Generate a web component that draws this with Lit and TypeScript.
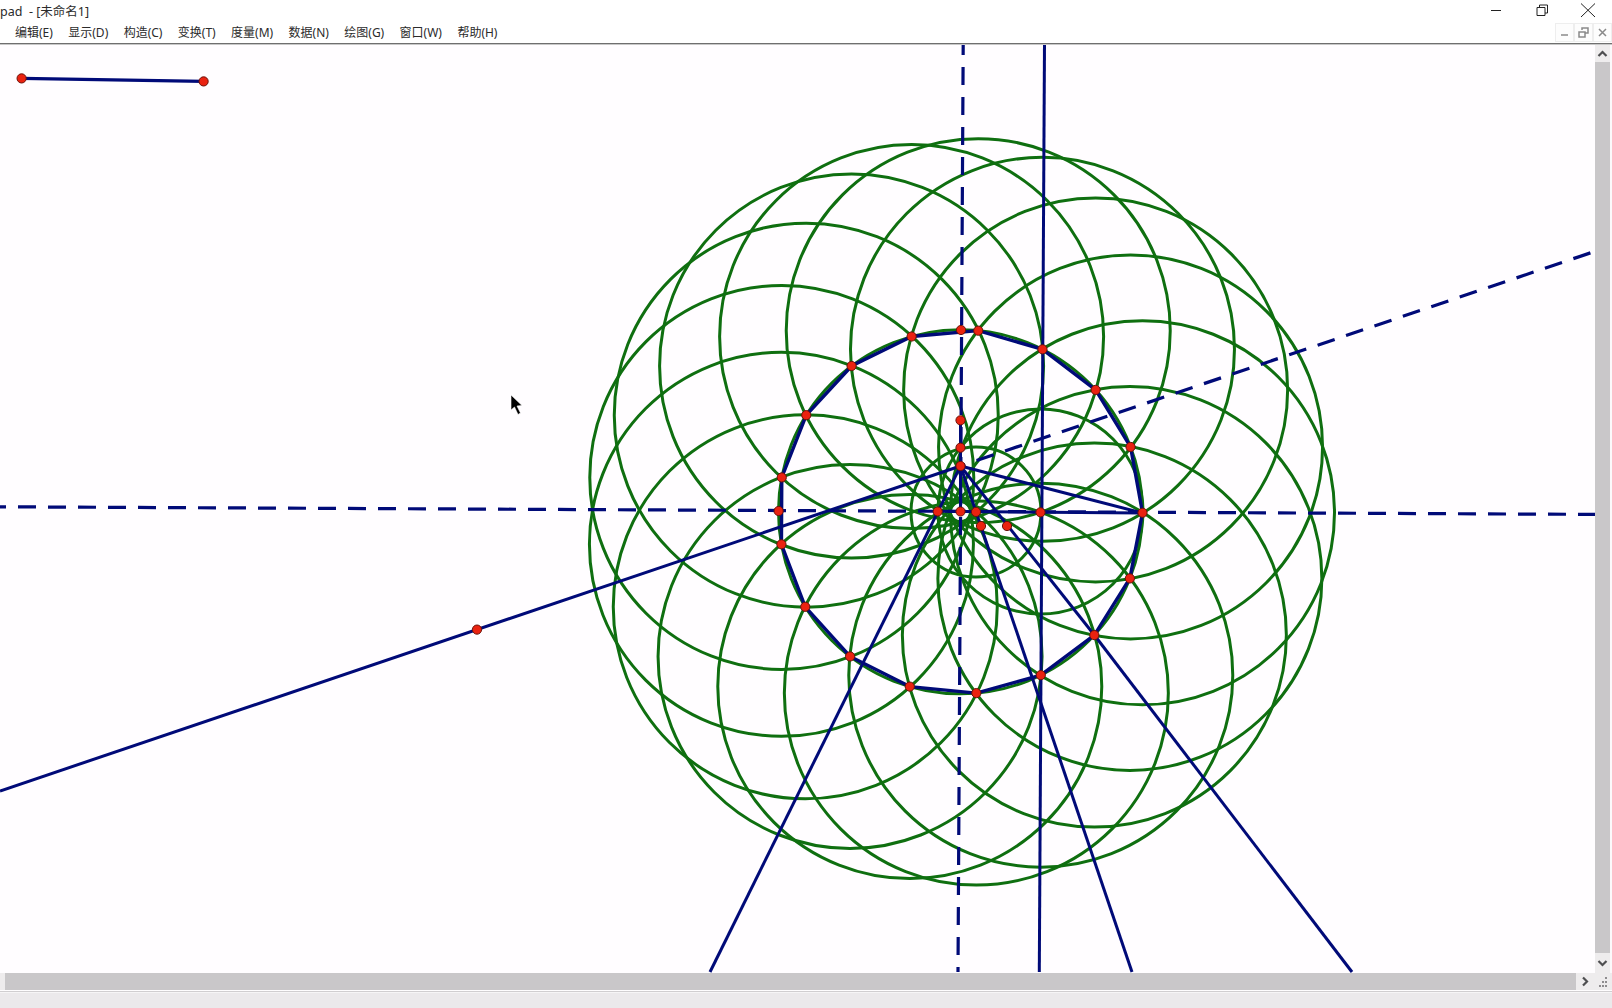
import { LitElement, html, css, svg } from "lit";
import { customElement } from "lit/decorators.js";

const MENUS = ["编辑(E)", "显示(D)", "构造(C)", "变换(T)", "度量(M)", "数据(N)", "绘图(G)", "窗口(W)", "帮助(H)"];

// regular 17-gon, slightly tilted like the original sketch
const CX = 960.5;
const CY = 511.8;
const R = 182;
const TILT = 0.3;
const vertices = Array.from({ length: 17 }, (_, i) => {
  const a = ((i * 360) / 17 + TILT) * (Math.PI / 180);
  return [CX + R * Math.cos(a), CY + R * Math.sin(a)];
});

const APEX = [960.5, 466];

// x1, y1, x2, y2
const solidLines = [
  [0, 791, ...APEX],
  [...APEX, 1142.4, 513],
  [...APEX, 710, 972],
  [...APEX, 1132, 972],
  [...APEX, 1094.3, 635],
  [1094.3, 635, 1352, 972],
  [1044.5, 44, 1039.3, 972],
  [960.5, 420, 960.5, 511],
  [937.7, 511.3, 1142.4, 513],
];

// x1, y1, x2, y2, dash offset
const dashedLines = [
  [0, 506.8, 1595, 514.4, 12],
  [963.2, 44, 958, 972, 7],
  [...APEX, 1591.5, 252.5, 13],
];

const extraPoints = [
  [21.6, 78.4],
  [203.6, 81.4],
  [477, 629.6],
  [961, 330],
  [778.6, 511],
  [937.7, 511.5],
  [960.5, 511.5],
  [976, 511.9],
  [981, 526],
  [1007, 526],
  [1040.5, 512.3],
  [960.5, 466],
  [960.5, 447.7],
  [960.5, 420.3],
];

// centre x, centre y, radius of the two construction circles on the axis
const smallCircles = [
  [976, 512, 65],
  [1040.5, 511.5, 102.5],
];

@customElement("app-root")
export class AppRoot extends LitElement {
  static styles = css`
    :host {
      display: flex;
      flex-direction: column;
      width: 1612px;
      height: 1008px;
      overflow: hidden;
      background: #fefdfe;
      font-family: "Noto Sans", "Noto Sans CJK SC", sans-serif;
      color: #2b2b2b;
    }
    .title {
      height: 22px;
      display: flex;
      align-items: center;
      justify-content: space-between;
      font-size: 12.5px;
      white-space: pre;
      background: #fff;
    }
    .title span {
      padding-bottom: 2px;
    }
    .winbtns {
      display: flex;
      align-items: center;
      height: 22px;
      padding-right: 1px;
    }
    .winbtns svg {
      display: block;
      width: 46px;
      height: 22px;
      fill: none;
      stroke: #222;
      stroke-width: 1;
    }
    .menubar {
      height: 21px;
      display: flex;
      align-items: center;
      gap: 15.4px;
      padding-left: 15px;
      font-size: 12px;
      background: #fff;
      position: relative;
    }
    .menubar > span {
      padding-bottom: 2px;
    }
    .mdi {
      margin-left: auto;
      display: flex;
      gap: 2px;
      padding-right: 1px;
    }
    .mdi svg {
      display: block;
      width: 17px;
      height: 17px;
      background: #fdfdfd;
      outline: 1px solid #eeeeee;
      fill: none;
      stroke: #8a8a8a;
      stroke-width: 1.5;
    }
    .rule {
      height: 1px;
      background: #6f6f6f;
      box-shadow: 0 1px 0 #c8c8c8;
      position: relative;
    }
    .main {
      display: flex;
      height: 929px;
    }
    .sketch {
      display: block;
      width: 1595px;
      height: 929px;
      background: #fffdff;
    }
    .sketch line,
    .sketch circle {
      fill: none;
    }
    .sketch .green {
      stroke: #0f6f10;
      stroke-width: 3;
    }
    .sketch .navy {
      stroke: #000a78;
      stroke-width: 3;
    }
    .sketch .edge {
      stroke: #000a78;
      stroke-width: 3.4;
    }
    .sketch .dashed {
      stroke: #000a78;
      stroke-width: 3.2;
      stroke-dasharray: 18 12;
    }
    .sketch .pt {
      fill: #ea2210;
      stroke: #6a120a;
      stroke-width: 1;
    }
    .sketch .cursor {
      fill: #000;
      stroke: #fff;
      stroke-width: 0.6;
    }
    .vbar {
      width: 15px;
      display: flex;
      flex-direction: column;
      background: #eeeced;
    }
    .thumb {
      flex: 1;
      background: #c9c7c9;
    }
    .arrow {
      display: block;
      flex: none;
      fill: none;
      stroke: #4e4e50;
      stroke-width: 2.2;
    }
    .vbar .arrow {
      width: 15px;
      height: 18px;
    }
    .vbar .arrow.down {
      height: 20px;
    }
    .gutter {
      width: 2px;
      background: #fbfafb;
    }
    .hbar {
      height: 17px;
      display: flex;
      background: #eeeced;
    }
    .hbar .left {
      width: 5px;
    }
    .hbar .thumb {
      flex: 1;
    }
    .hbar .arrow {
      width: 19px;
      height: 17px;
    }
    .grip {
      display: block;
      width: 17px;
      height: 17px;
      fill: #8e8c8e;
    }
    .status {
      flex: 1;
      background: #ebe9eb;
      border-top: 1px solid #d0ced0;
      box-shadow: inset 0 1px 0 #f6f5f6;
      margin-top: 1px;
    }
  `;

  renderSketch() {
    return html`<svg class="sketch" viewBox="0 44 1595 929">
      ${svg`
        ${vertices.map(([x, y]) => svg`<circle class="green" cx=${x} cy=${y} r="192"></circle>`)}
        ${smallCircles.map(([x, y, r]) => svg`<circle class="green" cx=${x} cy=${y} r=${r}></circle>`)}
        <circle class="green" cx=${CX} cy=${CY} r=${R}></circle>
        <polygon class="edge" fill="none" points=${vertices.map((p) => p.join(",")).join(" ")}></polygon>
        <line class="edge" x1="21.6" y1="78.4" x2="203.6" y2="81.4"></line>
        ${solidLines.map(([x1, y1, x2, y2]) => svg`<line class="navy" x1=${x1} y1=${y1} x2=${x2} y2=${y2}></line>`)}
        ${dashedLines.map(
          ([x1, y1, x2, y2, off]) =>
            svg`<line class="dashed" stroke-dashoffset=${off} x1=${x1} y1=${y1} x2=${x2} y2=${y2}></line>`
        )}
        ${[...vertices, ...extraPoints].map(([x, y]) => svg`<circle class="pt" cx=${x} cy=${y} r="4.6"></circle>`)}
        <path class="cursor" d="M511 395V410L514.5 407 518 414.5 520.5 413 517 406 522 405.5Z"></path>
      `}
    </svg>`;
  }

  render() {
    return html`
      <div class="title">
        <span>pad  - [未命名1]</span>
        <div class="winbtns">
          <svg viewBox="0 0 46 22"><path d="M18 10.5H28"></path></svg>
          <svg viewBox="0 0 46 22"><path d="M18 7.5H26V15.5H18ZM20.5 7.5V5H28.5V13H26"></path></svg>
          <svg viewBox="0 0 46 22"><path d="M16 3.5 30 17M30 3.5 16 17"></path></svg>
        </div>
      </div>
      <div class="menubar">
        ${MENUS.map((m) => html`<span>${m}</span>`)}
        <div class="mdi">
          <svg viewBox="0 0 17 17"><path d="M5 11H12"></path></svg>
          <svg viewBox="0 0 17 17"><path d="M4 8H10V13H4ZM7 6V4H13V9H10"></path></svg>
          <svg viewBox="0 0 17 17"><path d="M5 5 12 12M12 5 5 12"></path></svg>
        </div>
      </div>
      <div class="rule"></div>
      <div class="main">
        ${this.renderSketch()}
        <div class="vbar">
          <svg class="arrow" viewBox="0 0 15 18"><path d="M3.5 12 7.5 8 11.5 12"></path></svg>
          <div class="thumb"></div>
          <svg class="arrow down" viewBox="0 0 15 20"><path d="M3.5 8 7.5 12 11.5 8"></path></svg>
        </div>
        <div class="gutter"></div>
      </div>
      <div class="hbar">
        <div class="left"></div>
        <div class="thumb"></div>
        <svg class="arrow" viewBox="0 0 19 17"><path d="M7 4.5 11 8.5 7 12.5"></path></svg>
        <svg class="grip" viewBox="0 0 17 17">
          <rect x="10" y="4" width="2" height="2"></rect>
          <rect x="7" y="8" width="2" height="2"></rect>
          <rect x="10" y="8" width="2" height="2"></rect>
          <rect x="4" y="12" width="2" height="2"></rect>
          <rect x="7" y="12" width="2" height="2"></rect>
          <rect x="10" y="12" width="2" height="2"></rect>
        </svg>
      </div>
      <div class="status"></div>
    `;
  }
}
